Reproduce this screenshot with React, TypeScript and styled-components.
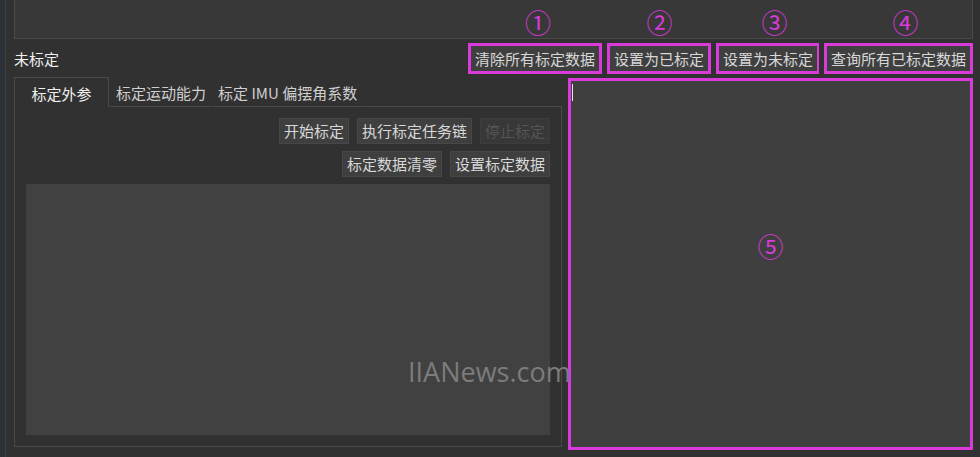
import styled, { createGlobalStyle } from "styled-components";

const GlobalStyle = createGlobalStyle`
  html, body {
    margin: 0;
    padding: 0;
    background: #313131;
  }
  * {
    box-sizing: border-box;
  }
`;

const MAGENTA = "#d93ad9";
const LINE = "#4a4a4a";

const Page = styled.div`
  position: relative;
  display: flex;
  width: 980px;
  height: 457px;
  overflow: hidden;
  background: #313131;
  font-family: "Noto Sans CJK SC", "Liberation Sans", sans-serif;
  font-size: 15px;
  color: #d6d6d6;
`;

const LeftStrip = styled.div`
  width: 6px;
  height: 100%;
  background: #2b3136;
  border-right: 1px solid #3a4248;
`;

const Main = styled.div`
  flex: 1;
  min-width: 0;
  display: flex;
  flex-direction: column;
  padding: 0 7px 0 8px;
`;

const TopPanel = styled.div`
  height: 39px;
  background: #383838;
  border-left: 1px solid ${LINE};
  border-right: 1px solid ${LINE};
  border-bottom: 1px solid ${LINE};
  display: flex;
  justify-content: flex-end;
  gap: 5px;
`;

const NumberSlot = styled.div<{ $w: number; $dx: number }>`
  width: ${(p) => p.$w}px;
  display: flex;
  justify-content: center;
  padding-top: 10px;
  padding-left: ${(p) => p.$dx}px;
  color: ${MAGENTA};
  font-family: "DejaVu Serif", "Noto Sans CJK SC", serif;
  font-size: 26px;
  line-height: 28px;
`;

const ActionRow = styled.div`
  height: 31px;
  margin-top: 4px;
  display: flex;
  align-items: center;
  justify-content: space-between;
`;

const StatusLabel = styled.div`
  color: #f0f0f0;
  font-size: 15px;
  line-height: 20px;
  padding-top: 1px;
`;

const ButtonGroup = styled.div`
  display: flex;
  gap: 5px;
`;

const Marked = styled.div<{ $w: number }>`
  width: ${(p) => p.$w}px;
  height: 31px;
  border: 3px solid ${MAGENTA};
  display: flex;
`;

const Button = styled.div<{ $disabled?: boolean }>`
  height: 26px;
  padding: 0 4px;
  display: flex;
  align-items: center;
  justify-content: center;
  white-space: nowrap;
  background: ${(p) => (p.$disabled ? "#383838" : "#3f3f3f")};
  border: 1px solid ${(p) => (p.$disabled ? "#3d3d3d" : "#474747")};
  color: ${(p) => (p.$disabled ? "#555555" : "#d8d8d8")};
  font-size: 15px;
  line-height: 20px;
`;

const MarkedInner = styled(Button)`
  flex: 1;
  height: 100%;
  border: none;
  padding: 0 4px;
`;

const Body = styled.div`
  margin-top: 3px;
  display: flex;
  align-items: flex-start;
  gap: 6px;
`;

const TabWidget = styled.div`
  width: 548px;
  height: 370px;
  display: flex;
  flex-direction: column;
`;

const TabBar = styled.div`
  height: 30px;
  display: flex;
`;

const Tab = styled.div<{ $active?: boolean; $first?: boolean }>`
  display: flex;
  align-items: center;
  justify-content: center;
  white-space: nowrap;
  line-height: 20px;
  padding: ${(p) => (p.$active ? "2px 0 0" : p.$first ? "2px 5px 0 6px" : "2px 5px 0")};
  width: ${(p) => (p.$active ? "95px" : "auto")};
  color: ${(p) => (p.$active ? "#f0f0f0" : "#cfcfcf")};
  border: 1px solid ${(p) => (p.$active ? LINE : "transparent")};
  border-bottom: ${(p) => (p.$active ? "none" : `1px solid ${LINE}`)};
`;

const TabFill = styled.div`
  flex: 1;
  border-bottom: 1px solid ${LINE};
`;

const Pane = styled.div`
  flex: 1;
  display: flex;
  flex-direction: column;
  gap: 7px;
  padding: 11px;
  border: 1px solid ${LINE};
  border-top: none;
`;

const PaneRow = styled.div`
  display: flex;
  justify-content: flex-end;
  gap: 8px;
`;

const LogArea = styled.div`
  flex: 1;
  background: #414141;
`;

const Viewer = styled.div`
  position: relative;
  flex: 1;
  height: 372px;
  margin-top: 1px;
  border: 3px solid ${MAGENTA};
  background: #3f3f3f;
  display: flex;
  align-items: center;
  justify-content: center;
`;

const Caret = styled.div`
  position: absolute;
  left: 1px;
  top: 3px;
  width: 1px;
  height: 17px;
  background: #e8e8e8;
`;

const BigNumber = styled.div`
  color: ${MAGENTA};
  font-family: "DejaVu Serif", "Noto Sans CJK SC", serif;
  font-size: 26px;
  margin-top: -38px;
`;

const Watermark = styled.div`
  position: absolute;
  left: 408px;
  top: 353px;
  font-family: "Open Sans", "Liberation Sans", sans-serif;
  font-size: 27px;
  color: #7c7c7c;
`;

const marked = [
  { n: "①", label: "清除所有标定数据", w: 134, dx: 8 },
  { n: "②", label: "设置为已标定", w: 104, dx: 3 },
  { n: "③", label: "设置为未标定", w: 103, dx: 16 },
  { n: "④", label: "查询所有已标定数据", w: 149, dx: 16 },
];

export default function App() {
  return (
    <Page>
      <GlobalStyle />
      <LeftStrip />
      <Main>
        <TopPanel>
          {marked.map((m) => (
            <NumberSlot key={m.n} $w={m.w} $dx={m.dx}>
              {m.n}
            </NumberSlot>
          ))}
        </TopPanel>
        <ActionRow>
          <StatusLabel>未标定</StatusLabel>
          <ButtonGroup>
            {marked.map((m) => (
              <Marked key={m.n} $w={m.w}>
                <MarkedInner>{m.label}</MarkedInner>
              </Marked>
            ))}
          </ButtonGroup>
        </ActionRow>
        <Body>
          <TabWidget>
            <TabBar>
              <Tab $active>标定外参</Tab>
              <Tab $first>标定运动能力</Tab>
              <Tab>标定 IMU 偏摆角系数</Tab>
              <TabFill />
            </TabBar>
            <Pane>
              <PaneRow>
                <Button>开始标定</Button>
                <Button>执行标定任务链</Button>
                <Button $disabled>停止标定</Button>
              </PaneRow>
              <PaneRow>
                <Button>标定数据清零</Button>
                <Button>设置标定数据</Button>
              </PaneRow>
              <LogArea />
            </Pane>
          </TabWidget>
          <Viewer>
            <Caret />
            <BigNumber>⑤</BigNumber>
          </Viewer>
        </Body>
      </Main>
      <Watermark>IIANews.com</Watermark>
    </Page>
  );
}
